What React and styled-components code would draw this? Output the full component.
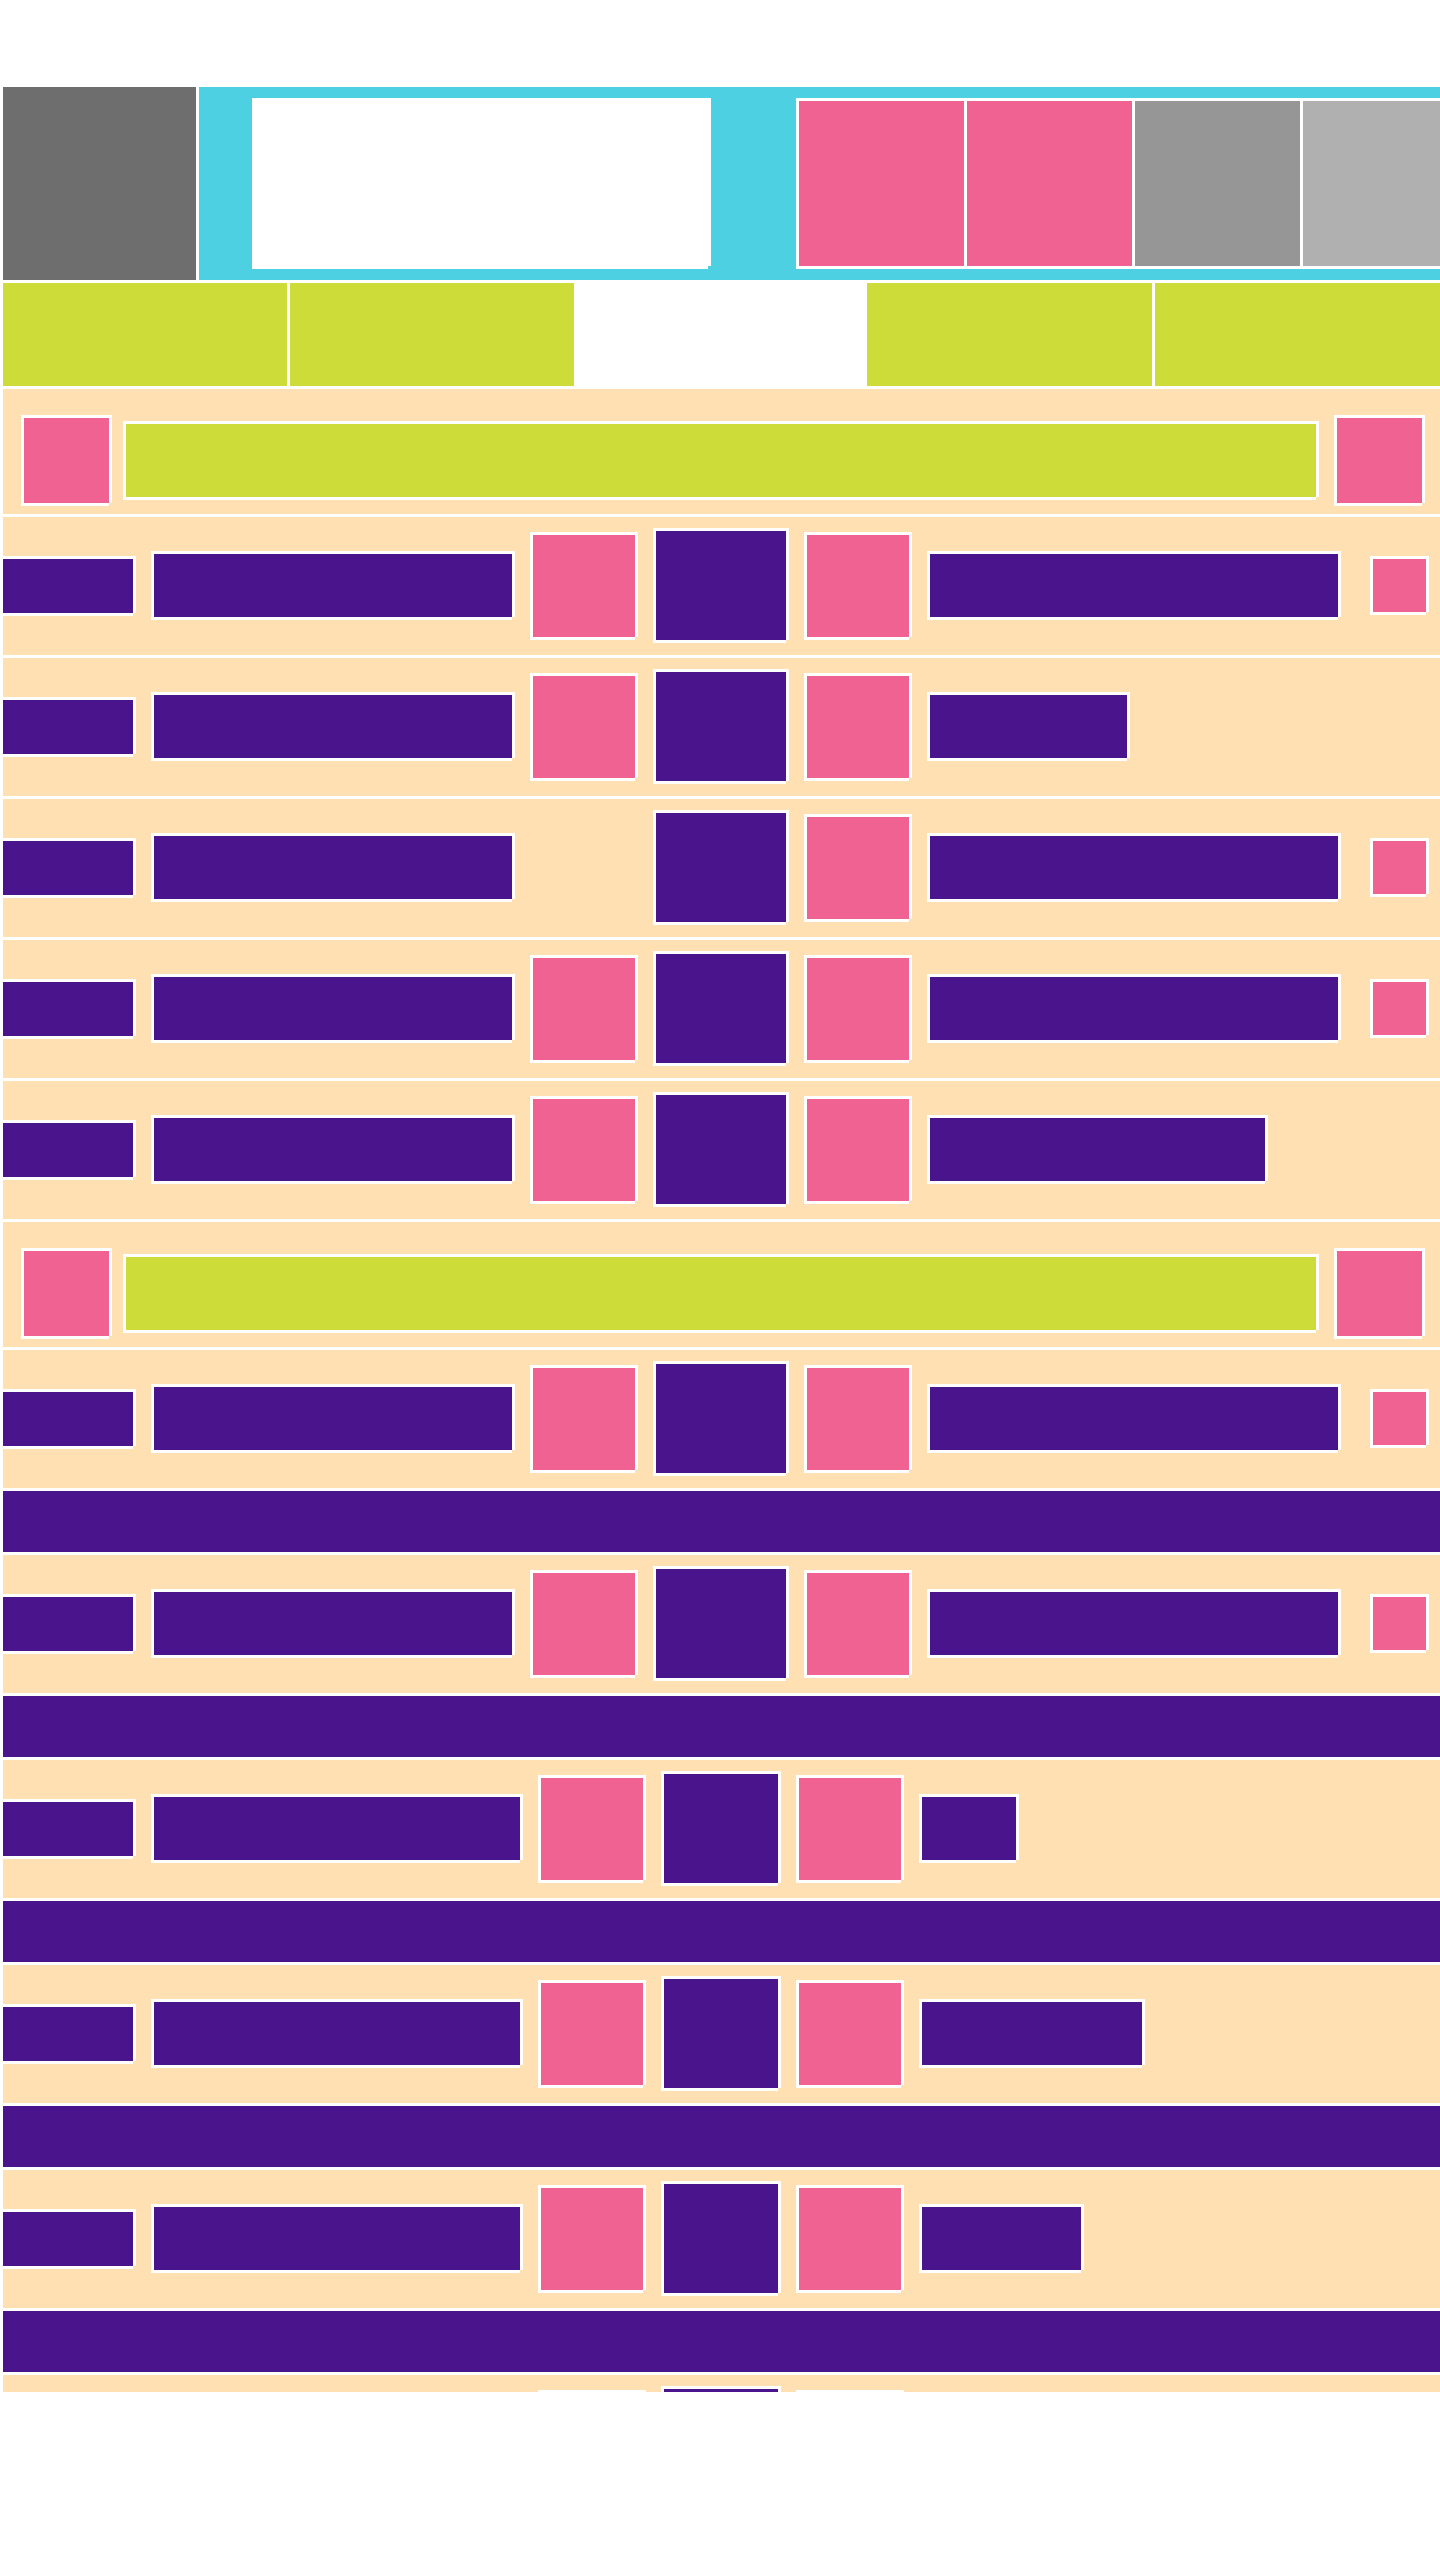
import React from "react";
import styled, { createGlobalStyle, css, ThemeProvider } from "styled-components";

const theme = {
  line: "#ffffff",
  cyan: "#4dd0e1",
  lime: "#cddc39",
  pink: "#f06292",
  purple: "#4a148c",
  peach: "#ffe0b2",
  grayDark: "#6e6e6e",
  gray: "#969696",
  grayLight: "#b0b0b0",
};

const GlobalStyle = createGlobalStyle`
  *, *::before, *::after { box-sizing: border-box; }
  body { margin: 0; background: #ffffff; font-family: Roboto, sans-serif; }
  button { appearance: none; border: 0; padding: 0; margin: 0; border-radius: 0; cursor: pointer; }
`;

const fill = (p) => p.theme[p.$tone];

/* White 3px outline whose bottom-right corner is left open. */
const outlined = css`
  border: 3px solid transparent;
  background:
    linear-gradient(${fill}, ${fill}) padding-box,
    linear-gradient(#ffffff, #ffffff) 0 0 / calc(100% - 3px) 100% no-repeat border-box,
    linear-gradient(#ffffff, #ffffff) 0 0 / 100% calc(100% - 3px) no-repeat border-box;
`;

const Page = styled.div`
  display: flex;
  flex-direction: column;
  height: 100vh;
  padding-left: 3px;
  overflow: hidden;
  background: ${(p) => p.theme.line};
`;

const StatusBar = styled.div`
  flex: 0 0 87px;
`;

const AppBar = styled.header`
  display: flex;
  flex: 0 0 auto;
  gap: 3px;
  border-bottom: 3px solid ${(p) => p.theme.line};
`;

const MenuButton = styled.button`
  flex: 0 0 193px;
  height: 193px;
  && { background: ${(p) => p.theme.grayDark}; }
`;

const Toolbar = styled.div`
  display: flex;
  flex: 1;
  min-width: 0;
  gap: 85px;
  padding: 11px 0 11px 53px;
  background: ${(p) => p.theme.cyan};
`;

const Title = styled.div`
  ${outlined}
  flex: 1;
  min-width: 0;
  height: 171px;
`;

const Actions = styled.div`
  display: flex;
  flex: 0 0 644px;
  gap: 3px;
  padding: 3px 0 3px 3px;
  overflow: hidden;
  background: ${(p) => p.theme.line};
`;

const Action = styled.button`
  flex: 0 0 165px;
  height: 165px;
  background: ${fill};
`;

const Tabs = styled.nav`
  display: grid;
  flex: 0 0 auto;
  grid-template-columns: 284fr 284fr 287fr 285fr 285fr;
  gap: 3px;
  border-bottom: 3px solid ${(p) => p.theme.line};
`;

const Tab = styled.button`
  height: 103px;
  background: ${(p) => (p.$active ? p.theme.line : p.theme.lime)};
`;

const List = styled.main`
  flex: 1;
  min-height: 0;
  overflow: hidden;
`;

const BottomBar = styled.footer`
  flex: 0 0 168px;
`;

const LeagueHeader = styled.div`
  display: flex;
  align-items: center;
  padding: 26px 15px 8px 18px;
  background: ${(p) => p.theme.peach};
  background-clip: padding-box;
  border-bottom: 3px solid ${(p) => p.theme.line};
`;

const LeagueButton = styled.button`
  && {
    ${outlined}
  }
  flex: 0 0 91px;
  height: 91px;
`;

const LeagueName = styled.div`
  ${outlined}
  flex: 1;
  height: 79px;
  margin: 0 15px 0 11px;
`;

const MatchRow = styled.div`
  display: grid;
  grid-template-columns: minmax(0, 1fr) auto minmax(0, 1fr);
  align-items: center;
  gap: 15px;
  height: 141px;
  padding: 0 1px 1px 0;
  background: ${(p) => p.theme.peach};
  background-clip: padding-box;
  border-bottom: 3px solid ${(p) => p.theme.line};
`;

const Side = styled.div`
  display: flex;
  align-items: center;
`;

const Centre = styled.div`
  display: flex;
  align-items: center;
  gap: 15px;
`;

const Time = styled.div`
  ${outlined}
  border-left: 0;
  flex: 0 0 133px;
  height: 60px;
  margin-right: 15px;
`;

const Team = styled.div`
  ${outlined}
  flex: ${(p) => (p.$width ? `0 1 ${p.$width}px` : "1")};
  height: 69px;
`;

const Crest = styled.div`
  ${outlined}
  width: 108px;
  height: 108px;
  visibility: ${(p) => (p.$empty ? "hidden" : "visible")};
`;

const Score = styled.div`
  ${outlined}
  width: ${(p) => (p.$compact ? 120 : 136)}px;
  height: 115px;
`;

const MediaButton = styled.button`
  && {
    ${outlined}
    margin: 0 10px 0 29px;
  }
  flex: 0 0 59px;
  height: 59px;
`;

const Note = styled.div`
  height: 64px;
  background: ${(p) => p.theme.purple};
  border-bottom: 3px solid ${(p) => p.theme.line};
`;

const leagues = [
  {
    id: "first",
    matches: [
      { media: true },
      { away: 203 },
      { media: true, noHomeCrest: true },
      { media: true },
      { away: 341 },
    ],
  },
  {
    id: "second",
    matches: [
      { media: true, note: true },
      { media: true, note: true },
      { away: 100, compact: true, note: true },
      { away: 226, compact: true, note: true },
      { away: 165, compact: true, note: true },
      { away: 165, compact: true },
    ],
  },
];

function Match({ away, media, compact, noHomeCrest, note }) {
  return (
    <>
      <MatchRow>
        <Side>
          <Time $tone="purple" />
          <Team $tone="purple" />
        </Side>
        <Centre>
          <Crest $tone="pink" $empty={noHomeCrest} />
          <Score $tone="purple" $compact={compact} />
          <Crest $tone="pink" />
        </Centre>
        <Side>
          <Team $tone="purple" $width={away} />
          {media && <MediaButton $tone="pink" aria-label="Media" />}
        </Side>
      </MatchRow>
      {note && <Note />}
    </>
  );
}

export default function App() {
  return (
    <ThemeProvider theme={theme}>
      <GlobalStyle />
      <Page>
        <StatusBar />
        <AppBar>
          <MenuButton aria-label="Menu" />
          <Toolbar>
            <Title $tone="line" />
            <Actions>
              {["pink", "pink", "gray", "grayLight"].map((tone, i) => (
                <Action key={i} $tone={tone} aria-label={`Action ${i + 1}`} />
              ))}
            </Actions>
          </Toolbar>
        </AppBar>
        <Tabs>
          {[0, 1, 2, 3, 4].map((i) => (
            <Tab key={i} $active={i === 2} aria-label={`Day ${i + 1}`} />
          ))}
        </Tabs>
        <List>
          {leagues.map((league) => (
            <section key={league.id}>
              <LeagueHeader>
                <LeagueButton $tone="pink" aria-label="Favourite" />
                <LeagueName $tone="lime" />
                <LeagueButton $tone="pink" aria-label="Open league" />
              </LeagueHeader>
              {league.matches.map((match, i) => (
                <Match key={i} {...match} />
              ))}
            </section>
          ))}
        </List>
        <BottomBar />
      </Page>
    </ThemeProvider>
  );
}
